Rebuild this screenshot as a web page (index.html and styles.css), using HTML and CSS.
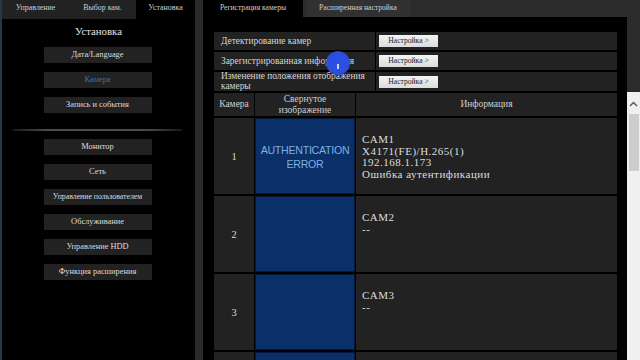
FILE: index.html
```html
<!DOCTYPE html>
<html lang="ru">
<head>
    <meta charset="UTF-8">
    <title>Установка</title>
    <link rel="stylesheet" href="styles.css">
</head>
<body>
    <div class="app">
        <div class="side">
            <div class="side-tabs">
                <div class="side-tab">Управление</div>
                <div class="side-tab">Выбор кам.</div>
                <div class="side-tab active">Установка</div>
            </div>
            <div class="side-title">Установка</div>
            <div class="menu">
                <div class="menu-btn">Дата/Language</div>
                <div class="menu-btn current">Камера</div>
                <div class="menu-btn">Запись и события</div>
            </div>
            <div class="sep"></div>
            <div class="menu">
                <div class="menu-btn">Монитор</div>
                <div class="menu-btn">Сеть</div>
                <div class="menu-btn small">Управление пользователем</div>
                <div class="menu-btn">Обслуживание</div>
                <div class="menu-btn">Управление HDD</div>
                <div class="menu-btn">Функция расширения</div>
            </div>
        </div>
        <div class="strip"></div>
        <div class="main">
            <div class="main-tabs">
                <div class="main-tab active">Регистрация камеры</div>
                <div class="main-tab">Расширенная настройка</div>
            </div>
            <div class="content">
                <div class="settings">
                    <div class="set-label">Детектирование камер</div>
                    <div class="set-action"><span class="btn">Настройка &gt;</span></div>
                    <div class="set-label">Зарегистрированная информация</div>
                    <div class="set-action"><span class="btn">Настройка &gt;</span></div>
                    <div class="set-label two">Изменение положения отображения камеры</div>
                    <div class="set-action"><span class="btn">Настройка &gt;</span></div>
                </div>
                <div class="cams">
                    <div class="th">Камера</div>
                    <div class="th">Свернутое<br>изображение</div>
                    <div class="th">Информация</div>

                    <div class="num">1</div>
                    <div class="thumb"><span class="err">AUTHENTICATION<br>ERROR</span></div>
                    <div class="info">CAM1<br>X4171(FE)/H.265(1)<br>192.168.1.173<br>Ошибка аутентификации</div>

                    <div class="num">2</div>
                    <div class="thumb"></div>
                    <div class="info">CAM2<br>--</div>

                    <div class="num">3</div>
                    <div class="thumb"></div>
                    <div class="info">CAM3<br>--</div>

                    <div class="num"></div>
                    <div class="thumb"></div>
                    <div class="info"></div>
                </div>
            </div>
        </div>
        <div class="scroll">
            <div class="scroll-top"></div>
            <div class="scroll-track">
                <svg class="arrow" width="9" height="6" viewBox="0 0 9 6"><path d="M1 5 L4.5 1.5 L8 5" fill="none" stroke="#555" stroke-width="1.4"/></svg>
                <div class="thumb-bar"></div>
            </div>
        </div>
    </div>
    <div class="touch"><span class="touch-dot"></span></div>
</body>
</html>
```

FILE: styles.css
```css
body {
    margin: 0;
    width: 640px;
    height: 360px;
    overflow: hidden;
    background: #000;
    font-family: "Liberation Serif", serif;
    color: #d8d8d8;
}
.app {
    display: flex;
    height: 360px;
    overflow: hidden;
}
.side {
    width: 193px;
    flex-shrink: 0;
    border-left: 2px solid #22384f;
    background: #000;
}
.side-tabs {
    display: flex;
    height: 19px;
    font-size: 7.9px;
    color: #cfcfcf;
}
.side-tab {
    width: 67px;
    background: #222;
    text-align: center;
    padding-top: 3px;
}
.side-tab.active {
    width: 59px;
    background: #000;
}
.side-title {
    text-align: center;
    font-size: 10.8px;
    line-height: 12px;
    margin: 6px 0 10px;
    color: #e0e0e0;
}
.menu {
    display: flex;
    flex-direction: column;
    align-items: center;
    gap: 9px;
    padding-right: 2px;
}
.menu-btn {
    width: 108px;
    height: 16px;
    line-height: 16px;
    background: #222;
    text-align: center;
    font-size: 8.4px;
    color: #dcdcdc;
}
.menu-btn.small {
    font-size: 7.8px;
}
.menu-btn.current {
    color: #3f6fa8;
}
.sep {
    height: 2px;
    margin: 16px 13px 8px 11px;
    background: linear-gradient(to right, #1a1a1a, #4a4a4a 20%, #4a4a4a 80%, #1a1a1a);
}
.strip {
    width: 8px;
    flex-shrink: 0;
    background: #2a2a2a;
}
.main {
    width: 424px;
    flex-shrink: 0;
    display: flex;
    flex-direction: column;
}
.main-tabs {
    display: flex;
    flex-shrink: 0;
    height: 17px;
    background: #2b2b2b;
    font-size: 7.6px;
    color: #cfcfcf;
}
.main-tab {
    width: 104px;
    margin-left: 3px;
    background: #313131;
    text-align: center;
    padding-top: 3px;
}
.main-tab.active {
    width: 100px;
    margin-left: 0;
    background: #000;
}
.content {
    padding: 15px 10px 0 11px;
}
.settings {
    display: grid;
    grid-template-columns: 161px 1fr;
    grid-template-rows: 18px 18px 19px;
    gap: 2px 1px;
}
.set-label {
    background: #222;
    font-size: 9.4px;
    padding-left: 7px;
    line-height: 18px;
    color: #d4d4d4;
    white-space: nowrap;
}
.set-label.two {
    line-height: 9.8px;
    white-space: normal;
}
.set-action {
    background: #222;
    display: flex;
    align-items: center;
    padding-left: 3px;
}
.btn {
    width: 59px;
    height: 12px;
    line-height: 12px;
    background: linear-gradient(#f4f4f4, #dcdcdc);
    color: #222;
    font-size: 7.6px;
    text-align: center;
}
.cams {
    display: grid;
    grid-template-columns: 40px 100px 1fr;
    grid-template-rows: 23px 76px 76px 76px 76px;
    gap: 2px 1px;
    margin-top: 2px;
}
.th {
    background: #222;
    display: flex;
    align-items: center;
    justify-content: center;
    text-align: center;
    font-size: 9.5px;
    line-height: 10.5px;
    color: #cfcfcf;
}
.num {
    background: #222;
    display: flex;
    align-items: center;
    justify-content: center;
    font-size: 10.5px;
}
.thumb {
    background: #0b2f68;
    border: 1px solid #06183a;
    display: flex;
    align-items: center;
    justify-content: center;
}
.err {
    font-family: "Liberation Sans", sans-serif;
    font-size: 10.6px;
    letter-spacing: -0.25px;
    line-height: 13.5px;
    text-align: center;
    color: #7fb0e2;
    margin-top: 3px;
}
.info {
    background: #222;
    padding: 16px 0 0 6px;
    font-size: 11px;
    letter-spacing: 0.5px;
    line-height: 11.5px;
    color: #dedede;
}
.scroll {
    width: 13px;
    flex-shrink: 0;
    display: flex;
    flex-direction: column;
}
.scroll-top {
    height: 92px;
    flex-shrink: 0;
    background: #2b2b2b;
}
.scroll-track {
    flex: 1;
    background: #f0f0f0;
    display: flex;
    flex-direction: column;
    align-items: center;
    padding-top: 9px;
}
.arrow {
    display: block;
}
.thumb-bar {
    width: 10px;
    height: 57px;
    margin-top: 7px;
    background: #cdcdcd;
}
.touch {
    position: absolute;
    left: 326px;
    top: 51px;
    width: 24px;
    height: 24px;
    border-radius: 50%;
    background: radial-gradient(circle, #2c4fe0 60%, rgba(40, 70, 220, 0.4) 100%);
    display: flex;
    align-items: center;
    justify-content: center;
}
.touch-dot {
    width: 2px;
    height: 5px;
    margin-top: 6px;
    background: #c8d4ff;
}
```
